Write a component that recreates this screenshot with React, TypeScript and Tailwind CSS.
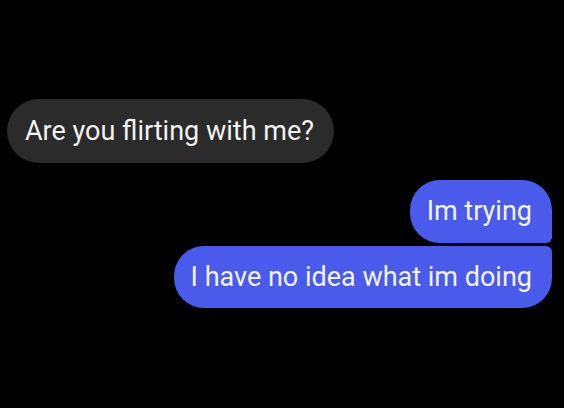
export default function App() {
  return (
    <div className="w-[564px] h-[408px] bg-black overflow-hidden font-['Roboto','Liberation_Sans',sans-serif] text-[27px] text-[#f2f2f2] leading-none">
      <div className="pt-[99px] pl-[7px] flex">
        <div className="h-[64px] rounded-full bg-[#2b2b2b] pl-[18px] pr-[20px] flex items-center">
          Are you flirting with me?
        </div>
      </div>
      <div className="mt-[17px] pr-[12px] flex flex-col items-end gap-[3px]">
        <div className="h-[63px] bg-[#4a5bec] rounded-[30px] rounded-br-[6px] pl-[17px] pr-[20px] flex items-center">
          Im trying
        </div>
        <div className="h-[62px] bg-[#4a5bec] rounded-[30px] rounded-tr-[6px] pl-[17px] pr-[20px] flex items-center">
          I have no idea what im doing
        </div>
      </div>
    </div>
  )
}
